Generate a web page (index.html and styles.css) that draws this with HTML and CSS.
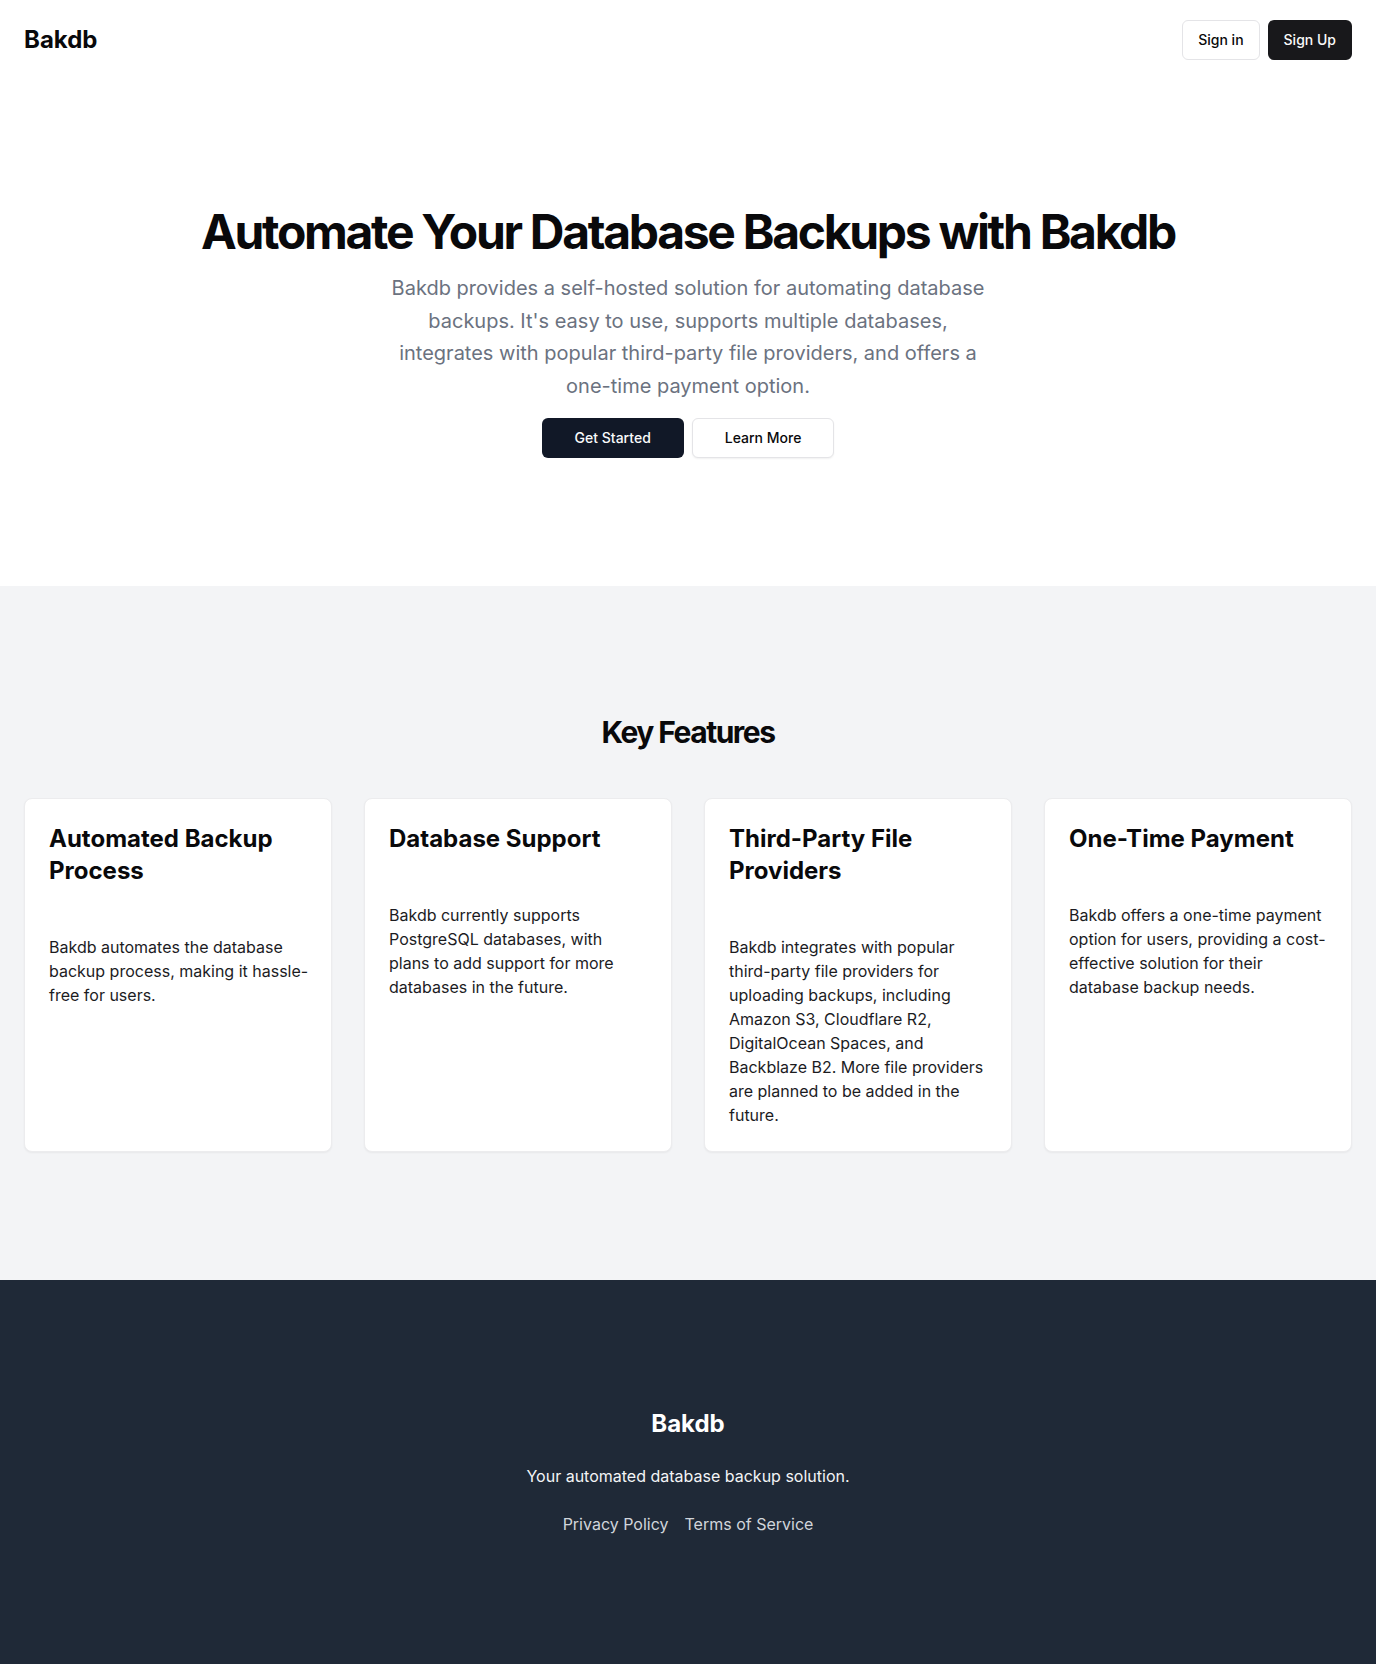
FILE: index.html
```html
<!DOCTYPE html>
<html lang="en">
<head>
<meta charset="utf-8">
<title>Bakdb</title>
<link rel="stylesheet" href="styles.css">
</head>
<body>
<header class="site-header">
  <a class="logo" href="#">Bakdb</a>
  <nav class="header-actions">
    <a class="btn btn-outline btn-sm" href="#">Sign in</a>
    <a class="btn btn-dark btn-sm" href="#">Sign Up</a>
  </nav>
</header>
<main>
  <section class="hero">
    <h1 class="hero-title">Automate Your Database Backups with Bakdb</h1>
    <p class="hero-text">Bakdb provides a self-hosted solution for automating database backups. It's easy to use, supports multiple databases, integrates with popular third-party file providers, and offers a one-time payment option.</p>
    <div class="hero-actions">
      <a class="btn btn-primary btn-lg" href="#">Get Started</a>
      <a class="btn btn-outline btn-lg btn-shadow" href="#">Learn More</a>
    </div>
  </section>
  <section class="features">
    <h2 class="features-title">Key Features</h2>
    <div class="features-grid">
      <div class="card">
        <div class="card-header"><h3 class="card-title">Automated Backup Process</h3></div>
        <div class="card-content"><p>Bakdb automates the database backup process, making it hassle-free for users.</p></div>
      </div>
      <div class="card">
        <div class="card-header"><h3 class="card-title">Database Support</h3></div>
        <div class="card-content"><p>Bakdb currently supports PostgreSQL databases, with<br>plans to add support for more databases in the future.</p></div>
      </div>
      <div class="card">
        <div class="card-header"><h3 class="card-title">Third-Party File Providers</h3></div>
        <div class="card-content"><p>Bakdb integrates with popular third-party file providers for uploading backups, including Amazon S3, Cloudflare R2, DigitalOcean Spaces, and Backblaze B2. More file providers are planned to be added in the future.</p></div>
      </div>
      <div class="card">
        <div class="card-header"><h3 class="card-title">One-Time Payment</h3></div>
        <div class="card-content"><p>Bakdb offers a one-time payment option for users, providing a cost-effective solution for their database backup needs.</p></div>
      </div>
    </div>
  </section>
</main>
<footer class="site-footer">
  <div class="footer-brand">Bakdb</div>
  <p class="footer-tagline">Your automated database backup solution.</p>
  <nav class="footer-links">
    <a href="#">Privacy Policy</a>
    <a href="#">Terms of Service</a>
  </nav>
</footer>
</body>
</html>
```
FILE: styles.css
```css
* { box-sizing: border-box; }
html, body { margin: 0; padding: 0; }
body {
  font-family: Inter, "Noto Sans", "Liberation Sans", sans-serif;
  color: #09090b;
  background: #ffffff;
  font-size: 16px;
  line-height: 24px;
}
a { text-decoration: none; color: inherit; }
h1, h2, h3, p { margin: 0; }

.site-header {
  display: flex;
  align-items: center;
  justify-content: space-between;
  height: 80px;
  padding: 0 24px;
}
.logo {
  font-size: 24px;
  line-height: 32px;
  font-weight: 700;
  color: #09090b;
}
.header-actions { display: flex; gap: 8px; }

.btn {
  display: inline-flex;
  align-items: center;
  justify-content: center;
  height: 40px;
  border-radius: 6px;
  font-size: 14px;
  font-weight: 500;
  line-height: 20px;
  border: 1px solid transparent;
}
.btn-sm { padding: 0 15px; }
.btn-lg { padding: 0 32px; }
.btn-outline { background: #fff; border-color: #e4e4e7; color: #09090b; }
.btn-shadow { box-shadow: 0 1px 2px rgba(0,0,0,0.06); }
.btn-dark { background: #18181b; color: #fafafa; }
.btn-primary { background: #111827; color: #f9fafb; }

.hero {
  display: flex;
  flex-direction: column;
  align-items: center;
  padding: 128px 24px;
  text-align: center;
}
.hero-title {
  font-size: 48px;
  line-height: 48px;
  font-weight: 700;
  letter-spacing: -0.048em;
  color: #09090b;
}
.hero-text {
  max-width: 600px;
  margin-top: 16px;
  font-size: 20px;
  line-height: 32.5px;
  color: #6b7280;
}
.hero-actions {
  display: flex;
  gap: 8px;
  margin-top: 16px;
}

.features {
  background: #f3f4f6;
  padding: 128px 24px;
}
.features-title {
  text-align: center;
  font-size: 30px;
  line-height: 36px;
  font-weight: 700;
  letter-spacing: -0.05em;
  color: #09090b;
}
.features-grid {
  display: grid;
  grid-template-columns: repeat(4, 1fr);
  gap: 32px;
  margin-top: 48px;
}
.card {
  background: #fff;
  border: 1px solid #ececee;
  border-radius: 8px;
  box-shadow: 0 1px 2px rgba(0,0,0,0.05);
}
.card-header { padding: 24px 22px 24px 24px; }
.card-title {
  font-size: 24px;
  line-height: 32px;
  font-weight: 700;
  letter-spacing: 0;
  color: #09090b;
}
.card-content { padding: 24px 22px 24px 24px; }
.card-content p {
  font-size: 16px;
  line-height: 24px;
  color: #1c1c1f;
}

.site-footer {
  background: #1f2937;
  color: #f9fafb;
  padding: 128px 24px;
  display: flex;
  flex-direction: column;
  align-items: center;
  gap: 24px;
  text-align: center;
}
.footer-brand {
  font-size: 24px;
  line-height: 32px;
  font-weight: 700;
  color: #ffffff;
}
.footer-tagline {
  font-size: 16px;
  line-height: 24px;
  color: #f3f4f6;
}
.footer-links {
  display: flex;
  gap: 16px;
  font-size: 16px;
  line-height: 24px;
}
.footer-links a { color: #d1d5db; }
```
